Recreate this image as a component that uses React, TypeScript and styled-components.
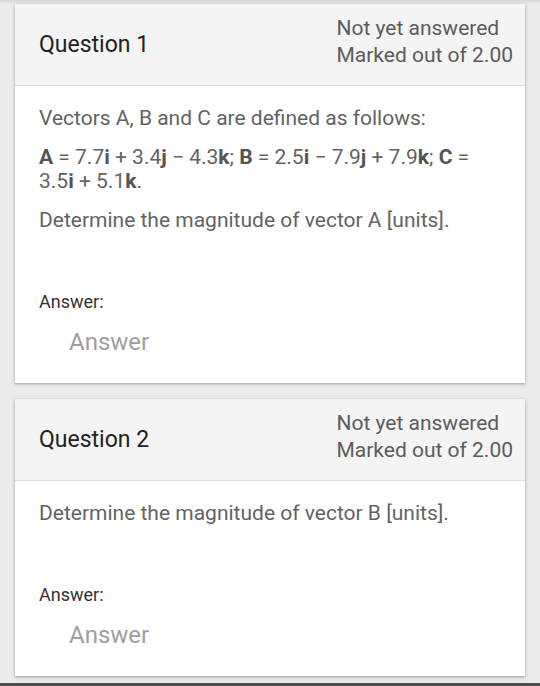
import styled, { createGlobalStyle } from 'styled-components';

const GlobalStyle = createGlobalStyle`
  html, body {
    margin: 0;
    padding: 0;
    background-color: #ebebeb;
    font-family: Roboto, 'Liberation Sans', sans-serif;
  }
`;

const Page = styled.div`
  height: 686px;
  display: flex;
  flex-direction: column;
  overflow: hidden;
  background: linear-gradient(#d6d6d6, #ebebeb 4px);
`;

const Content = styled.div`
  flex: 1;
  display: flex;
  flex-direction: column;
  gap: 16px;
  padding: 4px 15px 0;
`;

const BottomBar = styled.div`
  height: 3px;
  background-color: #4d4d4d;
`;

const Card = styled.div`
  background-color: #ffffff;
  box-shadow: 0 1px 3px rgba(0, 0, 0, 0.35);
`;

const Header = styled.div`
  height: 82px;
  box-sizing: border-box;
  display: flex;
  align-items: center;
  justify-content: space-between;
  padding: 0 12px 0 24px;
  background-color: #f4f4f4;
  border-bottom: 1px solid #dedede;
`;

const Title = styled.h3`
  margin: 0;
  font-size: 23px;
  font-weight: 400;
  color: #222222;
`;

const Status = styled.div`
  margin-bottom: 5px;
  font-size: 21px;
  line-height: 27px;
  color: #5c5c5c;
`;

const Body = styled.div`
  padding: 20px 24px 21px;
`;

const Para = styled.p`
  margin: 0 0 15px;
  font-size: 21px;
  line-height: 24px;
  color: #636363;

  b {
    font-weight: 700;
    color: #555555;
  }
`;

const AnswerBlock = styled.div`
  margin-top: 58px;
`;

const AnswerLabel = styled.label`
  display: block;
  font-size: 18px;
  line-height: 24px;
  color: #333333;
`;

const AnswerInput = styled.input`
  display: block;
  box-sizing: border-box;
  width: 300px;
  height: 40px;
  margin-top: 8px;
  padding: 0 0 0 30px;
  border: none;
  outline: none;
  background: transparent;
  font-family: inherit;
  font-size: 24px;
  color: #333333;

  &::placeholder {
    color: #9e9e9e;
  }
`;

type QuestionProps = {
  num: number;
  children: React.ReactNode;
};

const Question = ({ num, children }: QuestionProps) => (
  <Card>
    <Header>
      <Title>{`Question ${num}`}</Title>
      <Status>
        <div>{'Not yet answered'}</div>
        <div>{'Marked out of 2.00'}</div>
      </Status>
    </Header>
    <Body>
      {children}
      <AnswerBlock>
        <AnswerLabel>{'Answer:'}</AnswerLabel>
        <AnswerInput type="text" placeholder="Answer" />
      </AnswerBlock>
    </Body>
  </Card>
);

const App = () => (
  <>
    <GlobalStyle />
    <Page>
      <Content>
        <Question num={1}>
          <Para>{'Vectors A, B and C are defined as follows:'}</Para>
          <Para>
            <b>A</b> = 7.7<b>i</b> + 3.4<b>j</b> − 4.3<b>k</b>; <b>B</b> = 2.5
            <b>i</b> − 7.9<b>j</b> + 7.9<b>k</b>; <b>C</b> = 3.5<b>i</b> + 5.1
            <b>k</b>.
          </Para>
          <Para>{'Determine the magnitude of vector A [units].'}</Para>
        </Question>
        <Question num={2}>
          <Para>{'Determine the magnitude of vector B [units].'}</Para>
        </Question>
      </Content>
      <BottomBar />
    </Page>
  </>
);

export default App;
